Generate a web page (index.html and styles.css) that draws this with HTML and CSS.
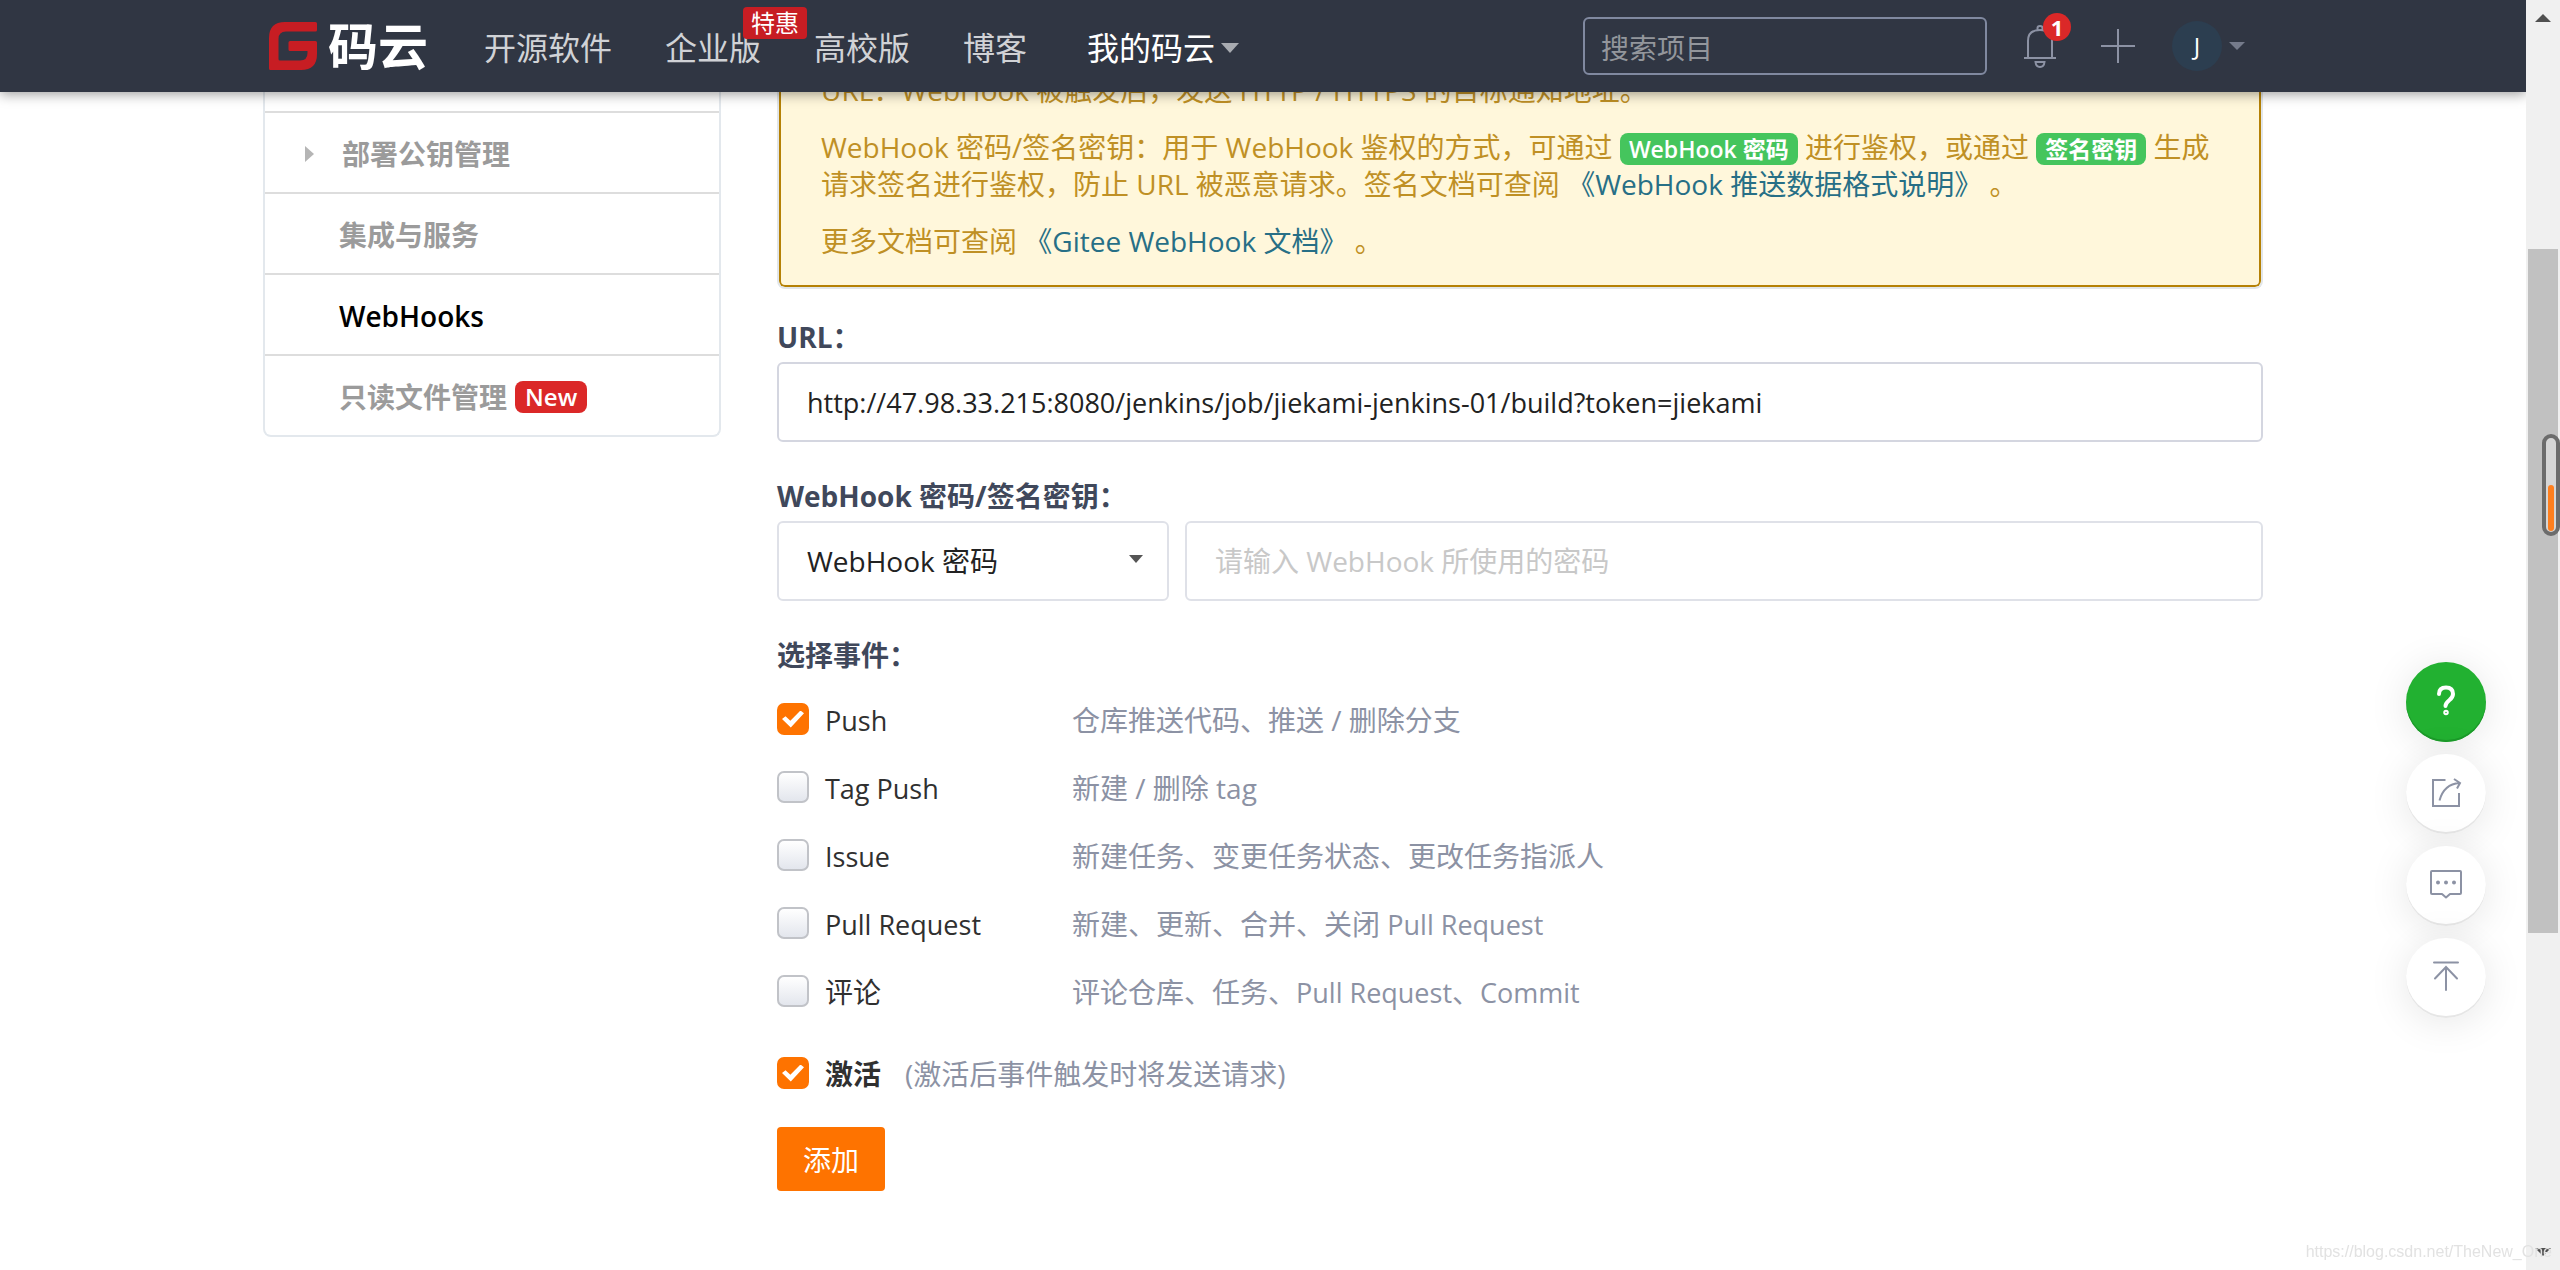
FILE: index.html
```html
<!DOCTYPE html>
<html lang="zh-CN">
<head>
<meta charset="utf-8">
<title>WebHooks - 码云</title>
<link rel="stylesheet" href="styles.css">
</head>
<body>
<header class="topbar">
  <div class="container topbar-inner">
    <a class="logo" href="#">
      <svg class="logo-mark" viewBox="0 0 48 48" aria-hidden="true"><path fill="#c71d23" d="M16 0H46.500Q48 0 48 1.500V8Q48 9.500 46.500 9.500H17Q9.500 9.500 9.500 17V37Q9.500 38.500 11 38.500H31Q38.500 38.500 38.500 31V29H21Q19.500 29 19.500 27.500V20.500Q19.500 19 21 19H46.500Q48 19 48 20.500V32Q48 48 32 48H1.500Q0 48 0 46.500V16Q0 0 16 0Z"/></svg>
      <span class="logo-name">码云</span>
    </a>
    <nav class="nav">
      <a href="#">开源软件</a>
      <a class="nav-deal" href="#">企业版<span class="deal">特惠</span></a>
      <a href="#">高校版</a>
      <a href="#">博客</a>
      <a class="nav-mine" href="#">我的码云<span class="caret"></span></a>
    </nav>
    <input class="search" type="search" placeholder="搜索项目" aria-label="搜索项目">
    <a class="bell" href="#" aria-label="通知">
      <svg width="34" height="44" viewBox="0 0 34 44" fill="none" stroke="#8c92a4" stroke-width="2"><path d="M1 34H33M5 34V17Q5 6 17 6Q29 6 29 17V34M14.500 6V4Q14.500 2 17 2Q19.500 2 19.500 4V6M12.500 38H21.500Q21 43 17 43Q13 43 12.500 38Z"/></svg>
      <span class="count">1</span>
    </a>
    <a class="plus" href="#" aria-label="新建">
      <svg width="36" height="36" viewBox="0 0 36 36" fill="none" stroke="#8c92a4" stroke-width="2"><path d="M18 1V35M1 18H35"/></svg>
    </a>
    <a class="user" href="#"><span class="avatar">J</span><span class="caret caret-small"></span></a>
  </div>
</header>

<div class="container layout">
  <ul class="side">
    <li><a class="has-sub" href="#">部署公钥管理</a></li>
    <li><a href="#">集成与服务</a></li>
    <li><a class="active" href="#">WebHooks</a></li>
    <li><a href="#">只读文件管理<span class="new">New</span></a></li>
  </ul>

  <main class="content">
    <section class="message">
      <p>URL：WebHook 被触发后，发送 HTTP / HTTPS 的目标通知地址。</p>
      <p>WebHook 密码/签名密钥：用于 WebHook 鉴权的方式，可通过 <span class="tag">WebHook 密码</span> 进行鉴权，或通过 <span class="tag">签名密钥</span> 生成请求签名进行鉴权，防止 URL 被恶意请求。签名文档可查阅 <a href="#">《WebHook 推送数据格式说明》</a> 。</p>
      <p>更多文档可查阅 <a href="#">《Gitee WebHook 文档》</a> 。</p>
    </section>

    <form>
      <div class="field">
        <label class="title" for="url">URL：</label>
        <input class="box box-url" id="url" type="text" value="http://47.98.33.215:8080/jenkins/job/jiekami-jenkins-01/build?token=jiekami">
      </div>
      <div class="field">
        <label class="title" for="kind">WebHook 密码/签名密钥：</label>
        <div class="pair">
          <div class="select">
            <select class="box" id="kind"><option>WebHook 密码</option><option>签名密钥</option></select>
            <span class="caret caret-dark"></span>
          </div>
          <input class="box" type="text" placeholder="请输入 WebHook 所使用的密码" aria-label="WebHook 密码">
        </div>
      </div>
      <fieldset class="events">
        <legend class="title">选择事件：</legend>
        <div class="event"><input class="tick" id="e1" type="checkbox" checked><label class="latin" for="e1">Push</label><span class="desc">仓库推送代码、推送 / 删除分支</span></div>
        <div class="event"><input class="tick" id="e2" type="checkbox"><label class="latin" for="e2">Tag Push</label><span class="desc">新建 / 删除 tag</span></div>
        <div class="event"><input class="tick" id="e3" type="checkbox"><label class="latin" for="e3">Issue</label><span class="desc">新建任务、变更任务状态、更改任务指派人</span></div>
        <div class="event"><input class="tick" id="e4" type="checkbox"><label class="latin" for="e4">Pull Request</label><span class="desc">新建、更新、合并、关闭 <span class="latin">Pull Request</span></span></div>
        <div class="event"><input class="tick" id="e5" type="checkbox"><label for="e5">评论</label><span class="desc">评论仓库、任务、<span class="latin">Pull Request</span>、<span class="latin">Commit</span></span></div>
      </fieldset>
      <div class="event activate"><input class="tick" id="on" type="checkbox" checked><label for="on">激活</label><span class="desc">(激活后事件触发时将发送请求)</span></div>
      <button class="submit" type="submit">添加</button>
    </form>
  </main>
</div>

<div class="tools">
  <button class="tool tool-help" type="button" aria-label="帮助"><svg width="40" height="40" viewBox="0 0 40 40" fill="none" stroke="#fff" stroke-width="4" stroke-linecap="round"><path d="M13 12Q13 5.500 20 5.500Q27 5.500 27 12Q27 15.500 23 18.500Q19.500 21.500 19.500 24"/><circle cx="20" cy="30.500" r="1" stroke-width="3.500"/></svg></button>
  <button class="tool" type="button" aria-label="分享"><svg width="40" height="40" viewBox="0 0 40 40" fill="none" stroke="#8c92a4" stroke-width="2"><path d="M19.500 6H7V32H33V19M13.500 26.500Q18 10 33.500 9M28 5L34 9L31 14.500"/></svg></button>
  <button class="tool" type="button" aria-label="反馈"><svg width="40" height="40" viewBox="0 0 40 40" fill="none" stroke="#8c92a4" stroke-width="2" stroke-linejoin="round"><path d="M6 5H34Q35 5 35 6V27Q35 28 34 28H24L20 31.500L16 28H6Q5 28 5 27V6Q5 5 6 5Z"/><g fill="#8c92a4" stroke="none"><circle cx="12" cy="16.500" r="2"/><circle cx="20" cy="16.500" r="2"/><circle cx="28" cy="16.500" r="2"/></g></svg></button>
  <button class="tool" type="button" aria-label="回到顶部"><svg width="40" height="40" viewBox="0 0 40 40" fill="none" stroke="#8c92a4" stroke-width="2" stroke-linecap="round"><path d="M8 4.500H32M20 9V32M9 20.500L20 9L31 20.500"/></svg></button>
</div>

<div class="scrollbar" aria-hidden="true">
  <span class="arrow arrow-up"></span>
  <span class="track"><span class="thumb"></span></span>
  <span class="arrow arrow-down"></span>
  <span class="meter"><span class="meter-fill"></span></span>
</div>
<div class="watermark">https://blog.csdn.net/TheNew_One</div>
</body>
</html>
```

FILE: styles.css
```css
* { box-sizing: border-box; }
body {
  margin: 0;
  padding-right: 34px;
  background: #fff;
  color: #303030;
  font: 28px/37px "Open Sans", "Noto Sans CJK SC", sans-serif;
}
a { text-decoration: none; }
input, select, button { font: inherit; }
.container { max-width: 2000px; margin: 0 auto; }
.latin { font-size: 27px; }

.topbar {
  position: sticky;
  top: 0;
  z-index: 5;
  background: #303643;
  box-shadow: 0 2px 12px rgba(0, 0, 0, .4);
}
.topbar-inner { display: flex; align-items: center; height: 92px; }
.logo { display: flex; align-items: center; gap: 11px; margin-left: 6px; }
.logo-mark { width: 48px; height: 48px; }
.logo-name { color: #fff; font-size: 50px; line-height: 50px; font-weight: 700; }
.nav { display: flex; gap: 53px; margin-left: 56px; padding-top: 3px; font-size: 32px; }
.nav a { color: #d0d2d6; }
.nav .nav-mine { display: flex; align-items: center; gap: 6px; margin-left: 7px; color: #fff; }
.nav-deal { position: relative; }
.deal {
  position: absolute;
  left: 78px;
  top: -22px;
  padding: 0 8px;
  border-radius: 4px;
  background: #c71d23;
  color: #fff;
  font-size: 24px;
  line-height: 32px;
  white-space: nowrap;
}
.caret { border: 9px solid transparent; border-top: 10px solid #a8abb1; border-bottom: 0; }
.caret-small { border-width: 8px; border-top-color: #757b8b; border-bottom: 0; }
.caret-dark { border-width: 7px; border-top: 8px solid #555; border-bottom: 0; }
.search {
  width: 404px;
  height: 58px;
  margin-left: auto;
  padding: 3px 16px 0;
  border: 2px solid #8089a0;
  border-radius: 6px;
  background: transparent;
  color: #fff;
}
.search::placeholder { color: #93969c; opacity: 1; }
.bell { position: relative; display: flex; margin-left: 36px; }
.count {
  position: absolute;
  left: 20px;
  top: -11px;
  width: 28px;
  border-radius: 14px;
  background: #db2828;
  color: #fff;
  font-size: 22px;
  line-height: 28px;
  font-weight: 700;
  text-align: center;
}
.plus { display: flex; margin-left: 43px; }
.user { display: flex; align-items: center; gap: 7px; margin: 0 18px 0 36px; }
.avatar {
  width: 50px;
  border-radius: 25px;
  background: #2c3e50;
  color: #fff;
  font-size: 24px;
  line-height: 50px;
  text-align: center;
}

.layout { display: grid; grid-template-columns: 458px 1fr; gap: 56px; align-items: start; }
.side {
  margin: 0;
  padding: 19px 0 0;
  list-style: none;
  border: 2px solid #e3e8ed;
  border-top: 0;
  border-radius: 0 0 8px 8px;
  font-weight: 600;
}
.side li { border-top: 2px solid #ddd; }
.side a { display: flex; align-items: center; height: 79px; padding: 3px 0 0 74px; color: #9b9b9b; }
.side .active { color: #000; }
.side .has-sub { padding-left: 40px; }
.has-sub::before { content: ""; margin-right: 28px; border: 8px solid transparent; border-left: 9px solid #b5b5b5; border-right: 0; }
.new { margin-left: 8px; padding: 0 10px; border-radius: 8px; background: #db2828; color: #fff; font-size: 24px; line-height: 32px; }

.content { min-width: 0; }
.message {
  margin-top: -20px;
  padding: 0 32px 25px 42px;
  border: 2px solid #e2e6e9;
  border-top: 0;
  border-radius: 8px;
  background: #fff7db;
  box-shadow: inset 0 0 0 2px #b58105;
  color: #bf9025;
}
.message p { margin: 0 0 20px; }
.message p:last-child { margin: 0; padding-bottom: 2px; }
.message a { color: #276f86; }
.tag { padding: 0 9px; border-radius: 8px; background: #45c55d; color: #fff; font-size: 23px; line-height: 32px; font-weight: 600; }

.field { margin-bottom: 37px; }
.message + form { margin-top: 31px; }
.title { display: block; padding: 0; line-height: 34px; font-weight: 700; color: #40485b; }
.box {
  display: block;
  width: 100%;
  height: 80px;
  margin-top: 8px;
  padding: 0 28px;
  border: 2px solid #dfe1e8;
  border-radius: 6px;
  background: #fff;
  color: #222;
  appearance: none;
}
.box-url { border-color: #d4d6e0; font-size: 27px; }
.box::placeholder { color: #c8c8c8; opacity: 1; }
.pair { display: grid; grid-template-columns: 392px 1fr; gap: 16px; }
.select { display: grid; grid-template-columns: 1fr; align-items: center; }
.select > * { grid-area: 1 / 1; }
.select .caret { justify-self: end; margin: 4px 26px 0 0; pointer-events: none; }

.events { margin: 0; padding: 13px 0 0; border: 0; min-width: 0; }
.event { display: grid; grid-template-columns: 32px 231px 1fr; column-gap: 16px; align-items: center; height: 68px; }
.event label, .desc { padding-top: 3px; }
.desc { color: #8c92a4; }
.tick {
  appearance: none;
  width: 32px;
  height: 32px;
  margin: 0;
  border: 2px solid #c1c3c8;
  border-radius: 7px;
  background: linear-gradient(#fff, #e3e6ed);
}
.tick:checked { display: grid; place-items: center; border-color: #fe7300; background: #fe7300; }
.tick:checked::before {
  content: "";
  width: 22px;
  height: 17px;
  background: #fff;
  clip-path: polygon(0 50%, 16% 34%, 38% 60%, 84% 0, 100% 16%, 40% 100%);
}
.activate { grid-template-columns: 32px auto 1fr; margin-top: 14px; }
.activate label { font-weight: 700; }
.activate .desc { padding-left: 8px; }
.submit {
  display: block;
  margin-top: 20px;
  padding: 2px 26px 0;
  border: 0;
  border-radius: 4px;
  background: #fe7300;
  color: #fff;
  line-height: 62px;
}

.tools { position: fixed; right: 74px; top: 662px; display: grid; gap: 12px; }
.tool {
  display: grid;
  place-items: center;
  width: 80px;
  height: 80px;
  padding: 0;
  border: 0;
  border-radius: 50%;
  background: #fff;
  box-shadow: 0 4px 40px rgba(0, 0, 0, .1), inset 0 -2px 0 #e6e6e6;
}
.tool-help { background: #22b131; box-shadow: 0 4px 40px rgba(0, 0, 0, .1), inset 0 -2px 0 #1c9a2a; }

.scrollbar {
  position: fixed;
  z-index: 6;
  top: 0;
  right: 0;
  bottom: 0;
  width: 34px;
  padding: 14px 2px;
  display: flex;
  flex-direction: column;
  align-items: center;
  gap: 12px;
  background: #f0f0f0;
}
.track { display: flex; flex: 1; width: 100%; padding: 215px 0 303px; }
.thumb { flex: 1; background: #c1c1c1; }
.arrow { border: 8px solid transparent; }
.arrow-up { border-top: 0; border-bottom-color: #505050; }
.arrow-down { border-bottom: 0; border-top-color: #505050; }
.meter {
  position: absolute;
  right: 0;
  top: 434px;
  width: 18px;
  height: 102px;
  padding: 0 2px 1px;
  display: flex;
  align-items: flex-end;
  border: 4px solid #6c6c6c;
  border-radius: 9px;
  background: #d6d6d6;
}
.meter-fill { width: 100%; height: 50%; border-radius: 3px; background: #ff7f1e; }
.watermark {
  position: fixed;
  z-index: 7;
  right: 8px;
  bottom: 8px;
  color: #e2e2e2;
  font: 16px/20px "Liberation Sans", sans-serif;
}
```
